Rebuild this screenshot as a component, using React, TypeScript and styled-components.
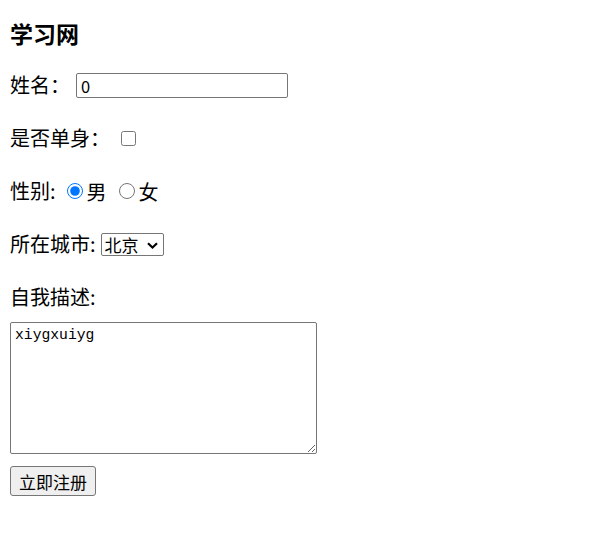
import React from 'react';
import styled, { createGlobalStyle } from 'styled-components';

const GlobalStyle = createGlobalStyle`
  html, body {
    margin: 0;
    padding: 0;
    background: #ffffff;
  }
  body {
    font-family: 'Noto Sans CJK SC', 'Liberation Sans', sans-serif;
    color: #000000;
  }
`;

const Page = styled.div`
  padding: 19px 10px 0;
  display: flex;
  flex-direction: column;
`;

const Title = styled.h3`
  margin: 0;
  font-size: 23px;
  line-height: 28px;
  font-weight: 700;
`;

const Form = styled.form`
  display: flex;
  flex-direction: column;
  margin-top: 24px;
`;

const Row = styled.div<{ $top?: number }>`
  display: flex;
  align-items: center;
  height: 28px;
  margin-top: ${(p) => p.$top ?? 0}px;
  font-size: 20px;
  white-space: pre;
`;

const Label = styled.span`
  line-height: 28px;
`;

const TextInput = styled.input`
  box-sizing: border-box;
  width: 212px;
  height: 25px;
  margin: 1px 0 0 6px;
  padding: 0 4px;
  border: 1px solid #767676;
  border-radius: 2px;
  font-family: 'Noto Sans CJK SC', 'Liberation Sans', sans-serif;
  font-size: 16.5px;
  line-height: 21px;
  color: #000;
  outline: none;
`;

const Check = styled.input`
  width: 15px;
  height: 15px;
  margin: 0 0 0 11px;
`;

const Radio = styled.input<{ $ml: number }>`
  width: 16px;
  height: 16px;
  margin: 0 0 0 ${(p) => p.$ml}px;
`;

const Option = styled.span`
  margin-left: 4px;
`;

const SelectWrap = styled.span`
  position: relative;
  display: inline-flex;
  margin-left: 5px;
`;

const CitySelect = styled.select`
  box-sizing: border-box;
  appearance: none;
  width: 63px;
  height: 23px;
  margin: 0;
  padding: 0 0 0 3px;
  border: 1px solid #767676;
  border-radius: 2px;
  background: #fff;
  font-family: 'Noto Sans CJK SC', sans-serif;
  font-size: 17px;
  line-height: 21px;
  color: #000;
`;

const Chevron = styled.svg`
  position: absolute;
  right: 6px;
  top: 9px;
  width: 11px;
  height: 7px;
  pointer-events: none;
`;

const Description = styled.textarea`
  box-sizing: border-box;
  width: 307px;
  height: 132px;
  margin-top: 11px;
  padding: 3px 4px;
  border: 1px solid #767676;
  border-radius: 2px;
  font-family: 'Liberation Mono', monospace;
  font-size: 14.7px;
  line-height: 18px;
  color: #000;
  resize: both;
`;

const Submit = styled.button`
  box-sizing: border-box;
  align-self: flex-start;
  width: 86px;
  height: 30px;
  margin-top: 12px;
  padding: 0;
  border: 1px solid #767676;
  border-radius: 3px;
  background: #efefef;
  font-family: 'Noto Sans CJK SC', sans-serif;
  font-size: 17px;
  color: #000;
`;

export default function App() {
  return (
    <>
      <GlobalStyle />
      <Page>
        <Title>学习网</Title>
        <Form onSubmit={(e) => e.preventDefault()}>
          <Row>
            <Label>姓名：</Label>
            <TextInput type="text" defaultValue="0" />
          </Row>
          <Row $top={25}>
            <Label>是否单身：</Label>
            <Check type="checkbox" />
          </Row>
          <Row $top={25}>
            <Label>性别:</Label>
            <Radio type="radio" name="sex" defaultChecked $ml={11} />
            <Option>男</Option>
            <Radio type="radio" name="sex" $ml={12} />
            <Option>女</Option>
          </Row>
          <Row $top={25}>
            <Label>所在城市:</Label>
            <SelectWrap>
              <CitySelect defaultValue="bj">
                <option value="bj">北京</option>
                <option value="sh">上海</option>
                <option value="gz">广州</option>
              </CitySelect>
              <Chevron viewBox="0 0 11 7">
                <path d="M1 1.2 L5.5 5.5 L10 1.2" fill="none" stroke="#000" strokeWidth="2.2" />
              </Chevron>
            </SelectWrap>
          </Row>
          <Row $top={25}>
            <Label>自我描述:</Label>
          </Row>
          <Description defaultValue="xiygxuiyg" />
          <Submit type="submit">立即注册</Submit>
        </Form>
      </Page>
    </>
  );
}
